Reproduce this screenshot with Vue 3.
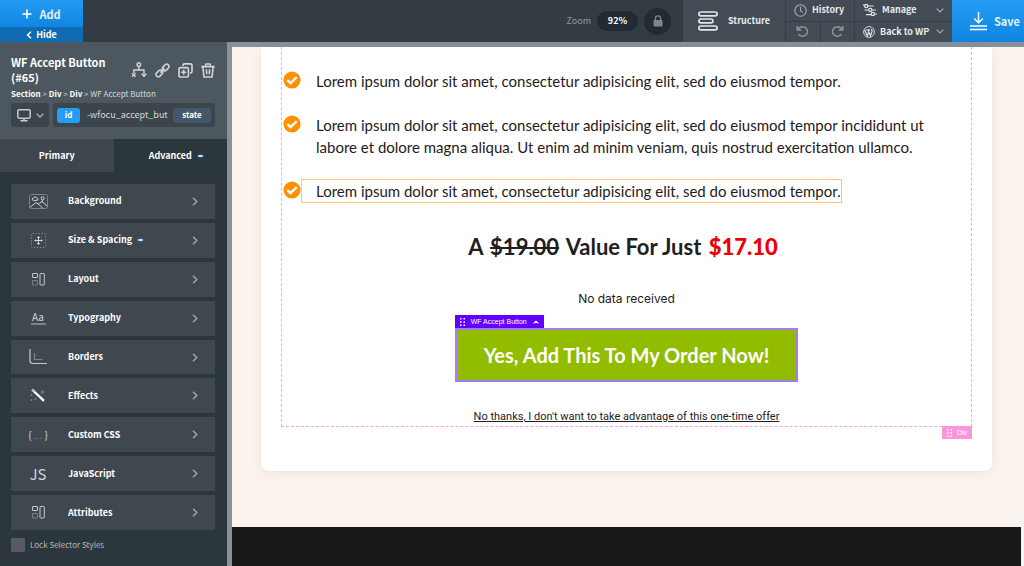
<template>
  <div class="builder">
    <header class="toolbar">
      <div class="add-group">
        <button class="add">
          <svg width="10" height="10" viewBox="0 0 10 10"><path d="M5 .5v9M.5 5h9" stroke="#fff" stroke-width="1.6" /></svg>
          Add
        </button>
        <button class="hide">
          <svg width="6" height="8" viewBox="0 0 6 8"><path d="M5 .8L1.6 4 5 7.2" fill="none" stroke="#fff" stroke-width="1.5" /></svg>
          Hide
        </button>
      </div>
      <div class="zoom">
        <span class="zoom-label">Zoom</span>
        <button class="zoom-value">92%</button>
        <button class="lock" aria-label="Lock zoom">
          <svg width="10" height="12" viewBox="0 0 10 12"><rect x=".5" y="5" width="9" height="6.5" rx=".8" fill="#7f868d" /><path d="M2.4 5V3.4a2.6 2.6 0 0 1 5.2 0V5" fill="none" stroke="#7f868d" stroke-width="1.3" /></svg>
        </button>
      </div>
      <button class="structure">
        <svg width="20" height="20" viewBox="0 0 20 20" fill="none" stroke="#e4e6e8" stroke-width="1.7">
          <rect x=".9" y="1" width="18.2" height="3.8" rx="1.9" />
          <rect x=".9" y="8" width="14" height="3.8" rx="1.9" />
          <rect x=".9" y="15" width="18.2" height="3.8" rx="1.9" />
        </svg>
        Structure
      </button>
      <div class="actions">
        <button class="history">
          <svg width="13" height="13" viewBox="0 0 13 13" fill="none" stroke="#a9aeb3" stroke-width="1.1"><circle cx="6.5" cy="6.5" r="5.7" /><path d="M6.5 2.8v4l2.2 1.5" /></svg>
          History
        </button>
        <button class="menu">
          <svg width="14" height="12" viewBox="0 0 14 12" fill="none" stroke="#e4e6e8" stroke-width="1.2">
            <path d="M0 1.2h1.5M5 2h5.5M1.5 6h4M9 6h4M3 10.6h5M11.7 10H14" />
            <circle cx="3.2" cy="2" r="1.6" /><circle cx="7.3" cy="6" r="1.6" /><circle cx="9.9" cy="10" r="1.6" />
          </svg>
          <span>Manage</span>
          <svg class="caret" width="8" height="5" viewBox="0 0 8 5"><path d="M.7.7L4 4 7.3.7" fill="none" stroke="#a9aeb3" stroke-width="1.2" /></svg>
        </button>
        <div class="undo-redo">
          <button aria-label="Undo">
            <svg width="13" height="13" viewBox="0 0 13 13" fill="none" stroke="#8f959a" stroke-width="1.5"><path d="M1.2 1v4h4M1.6 4.8C3 2.3 5 1.7 6.8 1.7a4.8 4.8 0 1 1-4.2 7.4" /></svg>
          </button>
          <button aria-label="Redo">
            <svg width="13" height="13" viewBox="0 0 13 13" fill="none" stroke="#8f959a" stroke-width="1.5"><path d="M11.8 1v4h-4M11.4 4.8C10 2.3 8 1.7 6.2 1.7a4.8 4.8 0 1 0 4.2 7.4" /></svg>
          </button>
        </div>
        <button class="menu">
          <svg width="12" height="12" viewBox="0 0 12 12" fill="none" stroke="#e4e6e8"><circle cx="6" cy="6" r="5.4" stroke-width=".9" /><path d="M1.7 3.9l2.6 6L6 5.2M3.2 3.9h1.4M5 3.9l2.5 6 1.6-4.7c.2-1-.9-1.2-.8-2.2M5 3.9h2" stroke-width="1.2" /></svg>
          <span>Back to WP</span>
          <svg class="caret" width="8" height="5" viewBox="0 0 8 5"><path d="M.7.7L4 4 7.3.7" fill="none" stroke="#a9aeb3" stroke-width="1.2" /></svg>
        </button>
      </div>
      <button class="save">
        <svg width="17" height="19" viewBox="0 0 17 19" fill="none" stroke="#fff" stroke-width="1.5"><path d="M8.5 0v10.5M4.2 6.5l4.3 4.3 4.3-4.3M0 14h17M0 17.5h17" /></svg>
        Save
      </button>
    </header>

    <div class="body">
      <aside class="sidebar">
        <div class="element">
          <div class="title-row">
            <h1>WF Accept Button (#65)</h1>
            <div class="tools">
              <button aria-label="Conditions">
                <svg width="16" height="16" viewBox="0 0 16 16" fill="none" stroke="#d3d6d9" stroke-width="1.4"><circle cx="7.8" cy="2.6" r="1.8" /><path d="M7.8 4.4V8M2.8 11V8H13v4.5M1 11.2l3.6 3.6M4.6 11.2L1 14.8M10.6 11.8l2.4 2.4 2.4-2.4" /></svg>
              </button>
              <button aria-label="Link">
                <svg width="15" height="15" viewBox="0 0 15 15" fill="none" stroke="#d3d6d9" stroke-width="1.5"><rect x="7" y="2.2" width="7.4" height="4.6" rx="2.3" transform="rotate(-45 10.7 4.5)" /><rect x=".6" y="8.2" width="7.4" height="4.6" rx="2.3" transform="rotate(-45 4.3 10.5)" /><path d="M5.4 9.6l4.2-4.2" /></svg>
              </button>
              <button aria-label="Duplicate">
                <svg width="15" height="15" viewBox="0 0 15 15" fill="none" stroke="#d3d6d9" stroke-width="1.6"><path d="M5 3V2.2A1.3 1.3 0 0 1 6.3.9h6.3A1.4 1.4 0 0 1 14 2.3v6.3a1.3 1.3 0 0 1-1.3 1.3H12" /><rect x="1" y="4.6" width="9.4" height="9.4" rx="1.3" /><path d="M5.7 6.8v5M3.2 9.3h5" /></svg>
              </button>
              <button aria-label="Delete">
                <svg width="14" height="15" viewBox="0 0 14 15" fill="none" stroke="#d3d6d9" stroke-width="1.6"><path d="M.3 3.6h13.4M4.3 3.4L5 1h4l.7 2.4M1.8 3.8L3 14h8l1.2-10.2M5.4 6.3l.3 5M8.6 6.3l-.3 5" /></svg>
              </button>
            </div>
          </div>
          <nav class="crumbs">
            <template v-for="crumb in crumbs" :key="crumb.id"><a href="#">{{ crumb.name }}</a> &gt; </template><span>WF Accept Button</span>
          </nav>
          <div class="selector-row">
            <button class="device" aria-label="Device">
              <svg width="14" height="13" viewBox="0 0 14 13" fill="none" stroke="#c6cacd" stroke-width="1.5"><rect x=".8" y=".8" width="12.4" height="8.4" rx="1.4" /><path d="M7 9v2.6M3.5 11.8h7" /></svg>
              <svg width="8" height="5" viewBox="0 0 8 5"><path d="M.7.7L4 4 7.3.7" fill="none" stroke="#a9aeb3" stroke-width="1.3" /></svg>
            </button>
            <div class="selector">
              <span class="id">id</span>
              <input v-model="selector" aria-label="Selector" />
              <button class="state">state</button>
            </div>
          </div>
        </div>

        <div class="tabs">
          <button :class="{ active: tab === 'primary' }" @click="tab = 'primary'">Primary</button>
          <button :class="{ active: tab === 'advanced' }" @click="tab = 'advanced'">Advanced <i class="dash"></i></button>
        </div>

        <div class="panels">
          <button v-for="panel in panels" :key="panel.name" class="panel">
            <span class="icon">
              <svg v-if="panel.icon === 'background'" width="19" height="15" viewBox="0 0 19 15" fill="none" stroke="#d3d6d9">
                <rect x=".5" y=".5" width="18" height="14" rx="2" stroke="#7d8389" />
                <path d="M.8 13.5L7 8.5l3.5 2.5 3 3M9.5 10l3.5-2.5 5.2 4.8" /><path d="M4.4 6.4a1.2 1.2 0 0 1 .2-2.4 1.7 1.7 0 0 1 3.1 0 1.2 1.2 0 0 1 .2 2.4z" /><circle cx="13.6" cy="4.3" r="1.5" /><path d="M13.6 5.8v2" />
              </svg>
              <svg v-else-if="panel.icon === 'spacing'" width="15" height="15" viewBox="0 0 15 15" fill="none" stroke="#d3d6d9">
                <rect x=".5" y=".5" width="14" height="14" rx="1" stroke="#7d8389" stroke-dasharray="1.5 1.5" />
                <path d="M7.5 3.8v7.4M3.8 7.5h7.4" /><path d="M7.5 3l1.8 2H5.7zM7.5 12l1.8-2H5.7zM3.2 7.5L5 6.2v2.6zM11.8 7.5L10 6.2v2.6z" fill="#d3d6d9" stroke="none" />
              </svg>
              <svg v-else-if="panel.icon === 'layout'" width="13" height="13" viewBox="0 0 13 13" fill="none" stroke="#c6cacd">
                <rect x=".5" y=".5" width="5" height="4" rx=".5" /><rect x=".5" y="7.5" width="5" height="4.5" rx=".5" stroke="#7d8389" /><rect x="8" y=".5" width="4.3" height="11.5" rx=".5" />
              </svg>
              <span v-else-if="panel.icon === 'type'" class="aa">Aa</span>
              <svg v-else-if="panel.icon === 'borders'" width="18" height="16" viewBox="0 0 18 16" fill="none">
                <path d="M1 0v11.5a3 3 0 0 0 3 3h14" stroke="#c6cacd" stroke-width="1.2" /><path d="M5.5 4v6.5h8" stroke="#7d8389" stroke-width="1.2" />
              </svg>
              <svg v-else-if="panel.icon === 'effects'" width="16" height="15" viewBox="0 0 16 15" fill="none">
                <path d="M2.5 2L14 12.8" stroke="#fff" stroke-width="2.4" /><path d="M2 1.5l2.6 2.4" stroke="#b9bdc1" stroke-width="2.6" />
                <path d="M12.5 2v4M10.5 4h4M1.5 6v2M.5 7h2M1.5 11v2M.5 12h2M5.5 10v2M4.5 11h2" stroke="#7d8389" />
              </svg>
              <span v-else-if="panel.icon === 'css'" class="braces">{ <em>...</em> }</span>
              <span v-else class="js">JS</span>
            </span>
            <span class="name">{{ panel.name }}</span>
            <i v-if="panel.edited" class="dash"></i>
            <svg class="chevron" width="6" height="9" viewBox="0 0 6 9"><path d="M1 .8l3.8 3.7L1 8.2" fill="none" stroke="#a3a8ad" stroke-width="1.4" /></svg>
          </button>
        </div>

        <label class="lock-styles"><input v-model="locked" type="checkbox" />Lock Selector Styles</label>
      </aside>

      <main class="canvas">
        <section class="page">
          <div class="card">
            <div class="div-box">
              <ul>
                <li v-for="(item, i) in items" :key="i">
                  <svg width="18" height="18" viewBox="0 0 18 18"><circle cx="9" cy="9" r="8.6" fill="#ff9100" /><path d="M4.3 9.1l3.2 3.1 6.2-6" fill="none" stroke="#fff" stroke-width="2.4" /></svg>
                  <span :class="{ hovered: i === 2 }">{{ item }}</span>
                </li>
              </ul>
              <h2>A <s>$19.00</s> Value For Just <b>$17.10</b></h2>
              <p class="no-data">No data received</p>
              <div class="accept-wrap">
                <div class="element-tag">
                  <svg width="5" height="8" viewBox="0 0 5 8" fill="#fff"><path d="M0 0h1.5v1.5H0zM3.5 0H5v1.5H3.5zM0 3.2h1.5v1.5H0zM3.5 3.2H5v1.5H3.5zM0 6.4h1.5V8H0zM3.5 6.4H5V8H3.5z" /></svg>
                  <span>WF Accept Button</span>
                  <svg width="6" height="4" viewBox="0 0 6 4"><path d="M.6 3.4L3 1.2l2.4 2.2" fill="none" stroke="#fff" stroke-width="1.2" /></svg>
                </div>
                <button class="accept">Yes, Add This To My Order Now!</button>
              </div>
              <a class="decline" href="#">No thanks, I don't want to take advantage of this one-time offer</a>
              <div class="div-tag">
                <svg width="5" height="8" viewBox="0 0 5 8" fill="#fff"><path d="M0 0h1.5v1.5H0zM3.5 0H5v1.5H3.5zM0 3.2h1.5v1.5H0zM3.5 3.2H5v1.5H3.5zM0 6.4h1.5V8H0zM3.5 6.4H5V8H3.5z" /></svg>
                <span>Div</span>
              </div>
            </div>
          </div>
        </section>
        <footer></footer>
      </main>
    </div>
  </div>
</template>

<script setup>
import { ref } from 'vue'

const tab = ref('advanced')
const selector = ref('-wfocu_accept_but')
const locked = ref(false)

const crumbs = [
  { id: 1, name: 'Section' },
  { id: 2, name: 'Div' },
  { id: 3, name: 'Div' },
]

const panels = [
  { name: 'Background', icon: 'background' },
  { name: 'Size & Spacing', icon: 'spacing', edited: true },
  { name: 'Layout', icon: 'layout' },
  { name: 'Typography', icon: 'type' },
  { name: 'Borders', icon: 'borders' },
  { name: 'Effects', icon: 'effects' },
  { name: 'Custom CSS', icon: 'css' },
  { name: 'JavaScript', icon: 'js' },
  { name: 'Attributes', icon: 'layout' },
]

const items = [
  'Lorem ipsum dolor sit amet, consectetur adipisicing elit, sed do eiusmod tempor.',
  'Lorem ipsum dolor sit amet, consectetur adipisicing elit, sed do eiusmod tempor incididunt ut labore et dolore magna aliqua. Ut enim ad minim veniam, quis nostrud exercitation ullamco.',
  'Lorem ipsum dolor sit amet, consectetur adipisicing elit, sed do eiusmod tempor.',
]
</script>

<style>
body {
  background: #2b363d;
}
</style>

<style scoped>
* {
  box-sizing: border-box;
}

button {
  border: 0;
  padding: 0;
  margin: 0;
  background: none;
  color: inherit;
  font: inherit;
  white-space: nowrap;
  cursor: pointer;
}

svg {
  display: block;
  flex: none;
}

.builder {
  display: flex;
  flex-direction: column;
  height: 100vh;
  overflow: hidden;
  color: #fff;
  font-family: "Noto Sans CJK JP", "Noto Sans", sans-serif;
  font-size: 9px;
  font-weight: 700;
  line-height: 14px;
}

/* top bar */
.toolbar {
  display: flex;
  flex: none;
  height: 42px;
  background: #333b43;
}

.add-group {
  width: 83px;
  display: flex;
  flex-direction: column;
}

.add-group button {
  display: flex;
  align-items: center;
  justify-content: center;
}

.add {
  flex: 1;
  gap: 7px;
  background: linear-gradient(#249cf3, #0f87e2);
  color: #e3f1fc;
  font-size: 11px;
}

.hide {
  height: 15px;
  gap: 4px;
  background: #0f6cb3;
}

.zoom {
  flex: 1;
  display: flex;
  align-items: center;
  justify-content: flex-end;
  gap: 6px;
  padding-right: 12px;
}

.zoom-label {
  color: #969ca2;
  font-weight: 400;
}

.zoom-value {
  width: 41px;
  height: 20px;
  border-radius: 10px;
  background: #222b33;
}

.lock {
  display: flex;
  align-items: center;
  justify-content: center;
  width: 27px;
  height: 27px;
  border-radius: 50%;
  background: #222b33;
}

.structure {
  display: flex;
  align-items: center;
  gap: 10px;
  width: 102px;
  padding-left: 15px;
  background: #434c54;
  color: #e9ebed;
}

.actions {
  display: grid;
  grid-template-columns: 68px 97px;
  grid-template-rows: 1fr 1fr;
  gap: 1px;
  padding-left: 1px;
  background: #353d44;
  color: #e9ebed;
}

.actions button {
  display: flex;
  align-items: center;
  background: #434c54;
}

.actions .history {
  gap: 5px;
  padding-left: 8px;
}

.actions .menu {
  gap: 5px;
  padding: 0 8px;
}

.caret {
  margin-left: auto;
}

.undo-redo {
  display: grid;
  grid-template-columns: 1fr 1fr;
  gap: 1px;
}

.undo-redo button {
  justify-content: center;
}

.save {
  display: flex;
  align-items: center;
  gap: 7px;
  width: 72px;
  padding-left: 18px;
  background: linear-gradient(#249cf3, #0f87e2);
  color: #e3f1fc;
  font-size: 11px;
}

/* sidebar */
.body {
  flex: 1;
  display: flex;
  min-height: 0;
}

.sidebar {
  display: flex;
  flex-direction: column;
  flex: none;
  width: 227px;
  background: #2b363d;
}

.element {
  padding: 13px 12px 12px 11px;
  background: #4d575f;
}

.title-row {
  display: flex;
  align-items: center;
  justify-content: space-between;
}

h1 {
  width: 110px;
  margin: 0;
  font-size: 11px;
  line-height: 15px;
}

.tools {
  display: flex;
  align-items: center;
  gap: 8px;
}

.crumbs {
  margin-top: 2px;
  color: #d6d9db;
  font-size: 8px;
  font-weight: 400;
}

.crumbs a {
  color: #fff;
  font-weight: 700;
  text-decoration: none;
}

.selector-row {
  display: flex;
  gap: 4px;
  margin-top: 2px;
}

.device {
  display: flex;
  align-items: center;
  justify-content: center;
  flex: none;
  gap: 5px;
  width: 38px;
  height: 24px;
  border-radius: 3px;
  background: #3b454b;
}

.selector {
  flex: 1;
  display: flex;
  align-items: center;
  min-width: 0;
  padding: 0 4px;
  border-radius: 3px;
  background: #3b454b;
}

.id,
.state {
  flex: none;
  height: 15px;
  border-radius: 3px;
  font-size: 8px;
  text-align: center;
}

.id {
  width: 23px;
  background: #259df5;
}

.state {
  width: 38px;
  background: #44576a;
}

.selector input {
  flex: 1;
  min-width: 0;
  border: 0;
  padding: 0 0 0 7px;
  outline: 0;
  background: none;
  color: #d6d9db;
  font: 400 9px/16px "Noto Sans CJK JP", "Noto Sans", sans-serif;
}

.tabs {
  display: grid;
  grid-template-columns: 1fr 1fr;
  height: 33px;
}

.tabs button {
  display: flex;
  align-items: center;
  justify-content: center;
  gap: 6px;
  background: #3d454d;
}

.tabs .active {
  padding-left: 11px;
  background: #2b363d;
}

.dash {
  width: 5px;
  height: 2px;
  border-radius: 1px;
  background: #cfe3f7;
  box-shadow: 0 0 4px 0 #2b7fd0;
}

.panels {
  flex: 1;
  display: flex;
  flex-direction: column;
  gap: 4px;
  padding: 12px 12px 0 11px;
}

.panel {
  flex: 1;
  display: flex;
  align-items: center;
  padding-right: 17px;
  background: #3f474f;
}

.icon {
  display: flex;
  align-items: center;
  justify-content: center;
  width: 54px;
  color: #d3d6d9;
  font-size: 10px;
  font-weight: 400;
}

.name {
  margin-right: 6px;
  margin-left: 3px;
}

.chevron {
  margin-left: auto;
}

.aa {
  width: 15px;
  border-bottom: 2px solid #7d8389;
  line-height: 12px;
}

.braces em {
  color: #7d8389;
  font-style: normal;
}

.js {
  font-size: 15px;
}

.lock-styles {
  display: flex;
  align-items: center;
  gap: 5px;
  padding: 8px 11px 14px;
  color: #b5babe;
  font-size: 8px;
  font-weight: 400;
}

.lock-styles input {
  appearance: none;
  width: 14px;
  height: 14px;
  margin: 0;
  border-radius: 1px;
  background: #565b63;
}

/* page preview */
.canvas {
  flex: 1;
  display: flex;
  flex-direction: column;
  border-top: 5px solid #86919a;
  border-left: 5px solid #86919a;
  background: #171717;
  color: #1f2021;
  font-family: Lato, sans-serif;
  font-weight: 400;
  box-shadow: inset -3px 0 #f5f5f7;
}

.page {
  margin-right: 3px;
  padding: 0 29px 56px;
  background: #fbf4ee;
}

.card {
  padding: 0 20px 44px;
  border-radius: 0 0 8px 8px;
  background: #fff;
  box-shadow: 0 2px 12px rgba(120, 80, 40, 0.1);
}

.div-box {
  position: relative;
  display: flex;
  flex-direction: column;
  align-items: center;
  border: 1px dashed #ff9fe0;
  border-top: 0;
  padding: 22px 0 1px;
}

ul {
  display: flex;
  flex-direction: column;
  gap: 20px;
  align-self: stretch;
  margin: 0;
  padding: 0;
  list-style: none;
}

li {
  display: flex;
  align-items: flex-start;
  padding-left: 1px;
  font-size: 15px;
  line-height: 22px;
}

li svg {
  margin-top: 2px;
}

li span {
  margin-right: 20px;
  border: 1px solid transparent;
  padding-left: 14px;
}

li .hovered {
  border-color: #ffc476;
  margin-right: 0;
}

h2 {
  margin: 30px 0 0;
  padding-right: 7px;
  font-size: 22px;
  line-height: 28px;
}

h2 s {
  margin: 0 2px;
}

h2 b {
  margin-left: 2px;
  color: #ed0000;
}

.no-data {
  margin: 30px 0 0;
  font-family: Inter, sans-serif;
  font-size: 12px;
  line-height: 16px;
}

.accept-wrap {
  position: relative;
  margin-top: 21px;
}

.element-tag,
.div-tag {
  position: absolute;
  display: flex;
  align-items: center;
  height: 13px;
  padding: 0 5px;
  color: #fff;
  font-family: "Liberation Sans", Arial, sans-serif;
  font-size: 7px;
  line-height: 13px;
  white-space: nowrap;
}

.element-tag {
  bottom: 100%;
  left: 0;
  gap: 6px;
  background: #6200ff;
}

.div-tag {
  top: 100%;
  right: -1px;
  gap: 5px;
  background: #ff94de;
}

.accept {
  border: 2px solid #a47df0;
  padding: 12px 27px;
  background: #91bc00;
  color: #fff;
  font-size: 20px;
  font-weight: 700;
  line-height: 26px;
}

.decline {
  margin-top: 27px;
  color: #1f2021;
  font-family: Roboto, sans-serif;
  font-size: 11px;
  line-height: 16px;
}
</style>
